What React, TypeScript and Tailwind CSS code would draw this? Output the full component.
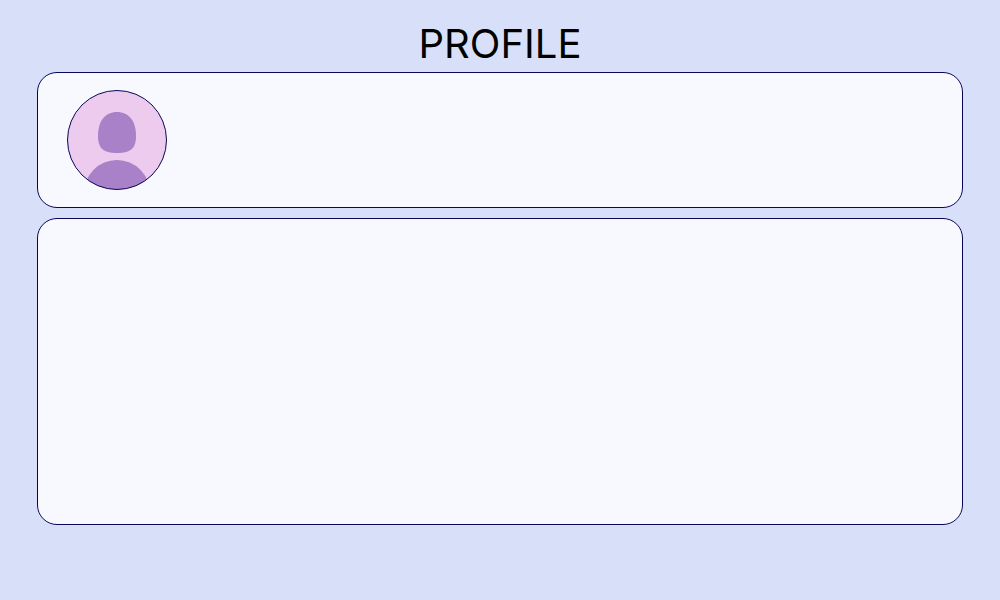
export default function App() {
  return (
    <main className="flex min-h-screen flex-col bg-[#d8dff8] px-[37px] pt-5 font-[Inter,sans-serif]">
      <h1 className="text-center text-[40px] leading-[48px] font-normal text-black">PROFILE</h1>
      <section aria-label="User" className="mt-1 flex rounded-[20px] border border-[#0b0658] bg-[#f8f9ff] px-[29px] py-[17px]">
        <svg className="size-[100px]" viewBox="0 0 100 100" role="img" aria-label="Avatar">
          <defs>
            <clipPath id="avatar-clip">
              <circle cx="50" cy="50" r="49.5" />
            </clipPath>
          </defs>
          <circle cx="50" cy="50" r="49.5" fill="#eccbee" />
          <g clipPath="url(#avatar-clip)" fill="#a881c8">
            <path d="M50 22C62 22 69 31 69 46C69 58 64 63 50 63C36 63 31 58 31 46C31 31 38 22 50 22Z" />
            <circle cx="50" cy="103" r="33" />
          </g>
          <circle cx="50" cy="50" r="49.5" fill="none" stroke="#0b0658" />
        </svg>
      </section>
      <section aria-label="Details" className="mt-[10px] min-h-[307px] rounded-[20px] border border-[#0b0658] bg-[#f8f9ff]" />
    </main>
  );
}
